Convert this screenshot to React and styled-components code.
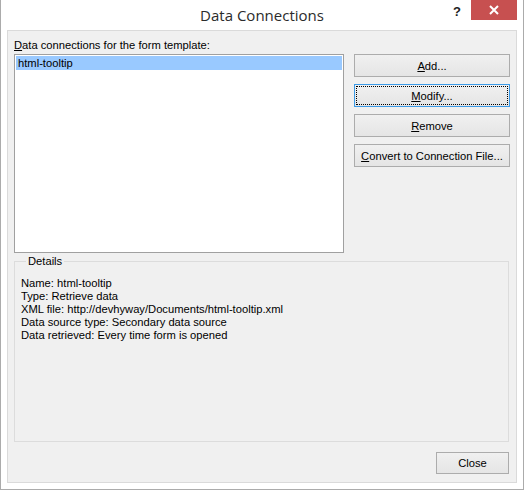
import React from 'react'
import styled, { createGlobalStyle } from 'styled-components'

const GlobalStyle = createGlobalStyle`
    html, body {
        margin: 0;
        padding: 0;
        background: #ffffff;
    }
    body {
        font-family: "Liberation Sans", Arial, sans-serif;
        font-size: 11.2px;
        color: #000;
    }
`;

const Window = styled.div`
    box-sizing: border-box;
    width: 524px;
    height: 490px;
    border: 1px solid #ababab;
    border-top: none;
    background: #ffffff;
    display: flex;
    flex-direction: column;
    padding: 0 6px 6px 6px;
`;

const TitleBar = styled.div`
    position: relative;
    height: 30px;
    flex-shrink: 0;
    display: flex;
    align-items: center;
    justify-content: center;
`;

const Title = styled.div`
    font-family: "Open Sans", "Liberation Sans", sans-serif;
    font-size: 15px;
    color: #2b2b2b;
`;

const Controls = styled.div`
    position: absolute;
    top: 0;
    right: 0;
    display: flex;
    align-items: flex-start;
`;

const HelpButton = styled.div`
    width: 28px;
    height: 22px;
    display: flex;
    align-items: center;
    justify-content: center;
    font-family: "Liberation Sans", sans-serif;
    font-weight: bold;
    font-size: 13px;
    color: #222;
`;

const CloseX = styled.div`
    width: 46px;
    height: 20px;
    background: #c75050;
    display: flex;
    align-items: center;
    justify-content: center;
`;

const Client = styled.div`
    flex: 1;
    background: #f0f0f0;
    border: 1px solid #dadada;
    display: flex;
    flex-direction: column;
    padding: 6px 6px 7px 6px;
`;

const TopRow = styled.div`
    display: flex;
    gap: 10px;
`;

const ListColumn = styled.div`
    display: flex;
    flex-direction: column;
    width: 330px;
`;

const Label = styled.div`
    height: 16px;
    line-height: 16px;
    margin-bottom: 1px;
`;

const ListBox = styled.div`
    box-sizing: border-box;
    height: 199px;
    background: #ffffff;
    border: 1px solid #a0a0a0;
    padding: 1px;
`;

const ListItem = styled.div`
    height: 14px;
    line-height: 14px;
    padding-left: 2px;
    background: ${p => (p.selected ? '#99c9ff' : 'transparent')};
`;

const ButtonColumn = styled.div`
    display: flex;
    flex-direction: column;
    gap: 7px;
    padding-top: 17px;
`;

const Button = styled.div`
    box-sizing: border-box;
    width: ${p => p.width || 156}px;
    height: ${p => p.height || 23}px;
    display: flex;
    align-items: center;
    justify-content: center;
    background: linear-gradient(#f0f0f0, #e5e5e5);
    border: 1px solid ${p => (p.focused ? '#3c9ae6' : '#acacac')};
    position: relative;
    u { text-decoration: underline; text-underline-offset: 1px; }
`;

const FocusRing = styled.span`
    position: absolute;
    inset: 1px;
    border: 1px dotted #000;
    pointer-events: none;
`;

const Details = styled.fieldset`
    margin: 1px 0 0 0;
    padding: 9px 0 0 6px;
    height: 188px;
    box-sizing: border-box;
    border: 1px solid #dcdcdc;
    min-width: 0;
    width: 495px;
`;

const Legend = styled.legend`
    padding: 0 2px;
    margin-left: 5px;
    line-height: 14px;
`;

const DetailLine = styled.div`
    line-height: 13px;
    height: 13px;
`;

const Footer = styled.div`
    display: flex;
    justify-content: flex-end;
    padding-top: 10px;
    width: 495px;
`;

const details = [
    'Name: html-tooltip',
    'Type: Retrieve data',
    'XML file: http://devhyway/Documents/html-tooltip.xml',
    'Data source type: Secondary data source',
    'Data retrieved: Every time form is opened',
]

const App = () => {
    return (
        <>
            <GlobalStyle />
            <Window>
                <TitleBar>
                    <Title>Data Connections</Title>
                    <Controls>
                        <HelpButton>?</HelpButton>
                        <CloseX>
                            <svg width="10" height="10" viewBox="0 0 10 10">
                                <path d="M1 1 L9 9 M9 1 L1 9" stroke="#fff" strokeWidth="2" />
                            </svg>
                        </CloseX>
                    </Controls>
                </TitleBar>
                <Client>
                    <TopRow>
                        <ListColumn>
                            <Label><u>D</u>ata connections for the form template:</Label>
                            <ListBox>
                                <ListItem selected>html-tooltip</ListItem>
                            </ListBox>
                        </ListColumn>
                        <ButtonColumn>
                            <Button><span><u>A</u>dd...</span></Button>
                            <Button focused><FocusRing /><span><u>M</u>odify...</span></Button>
                            <Button><span><u>R</u>emove</span></Button>
                            <Button><span><u>C</u>onvert to Connection File...</span></Button>
                        </ButtonColumn>
                    </TopRow>
                    <Details>
                        <Legend>Details</Legend>
                        {details.map(line => (
                            <DetailLine key={line}>{line}</DetailLine>
                        ))}
                    </Details>
                    <Footer>
                        <Button width={73} height={22}>Close</Button>
                    </Footer>
                </Client>
            </Window>
        </>
    )
}

export default App
